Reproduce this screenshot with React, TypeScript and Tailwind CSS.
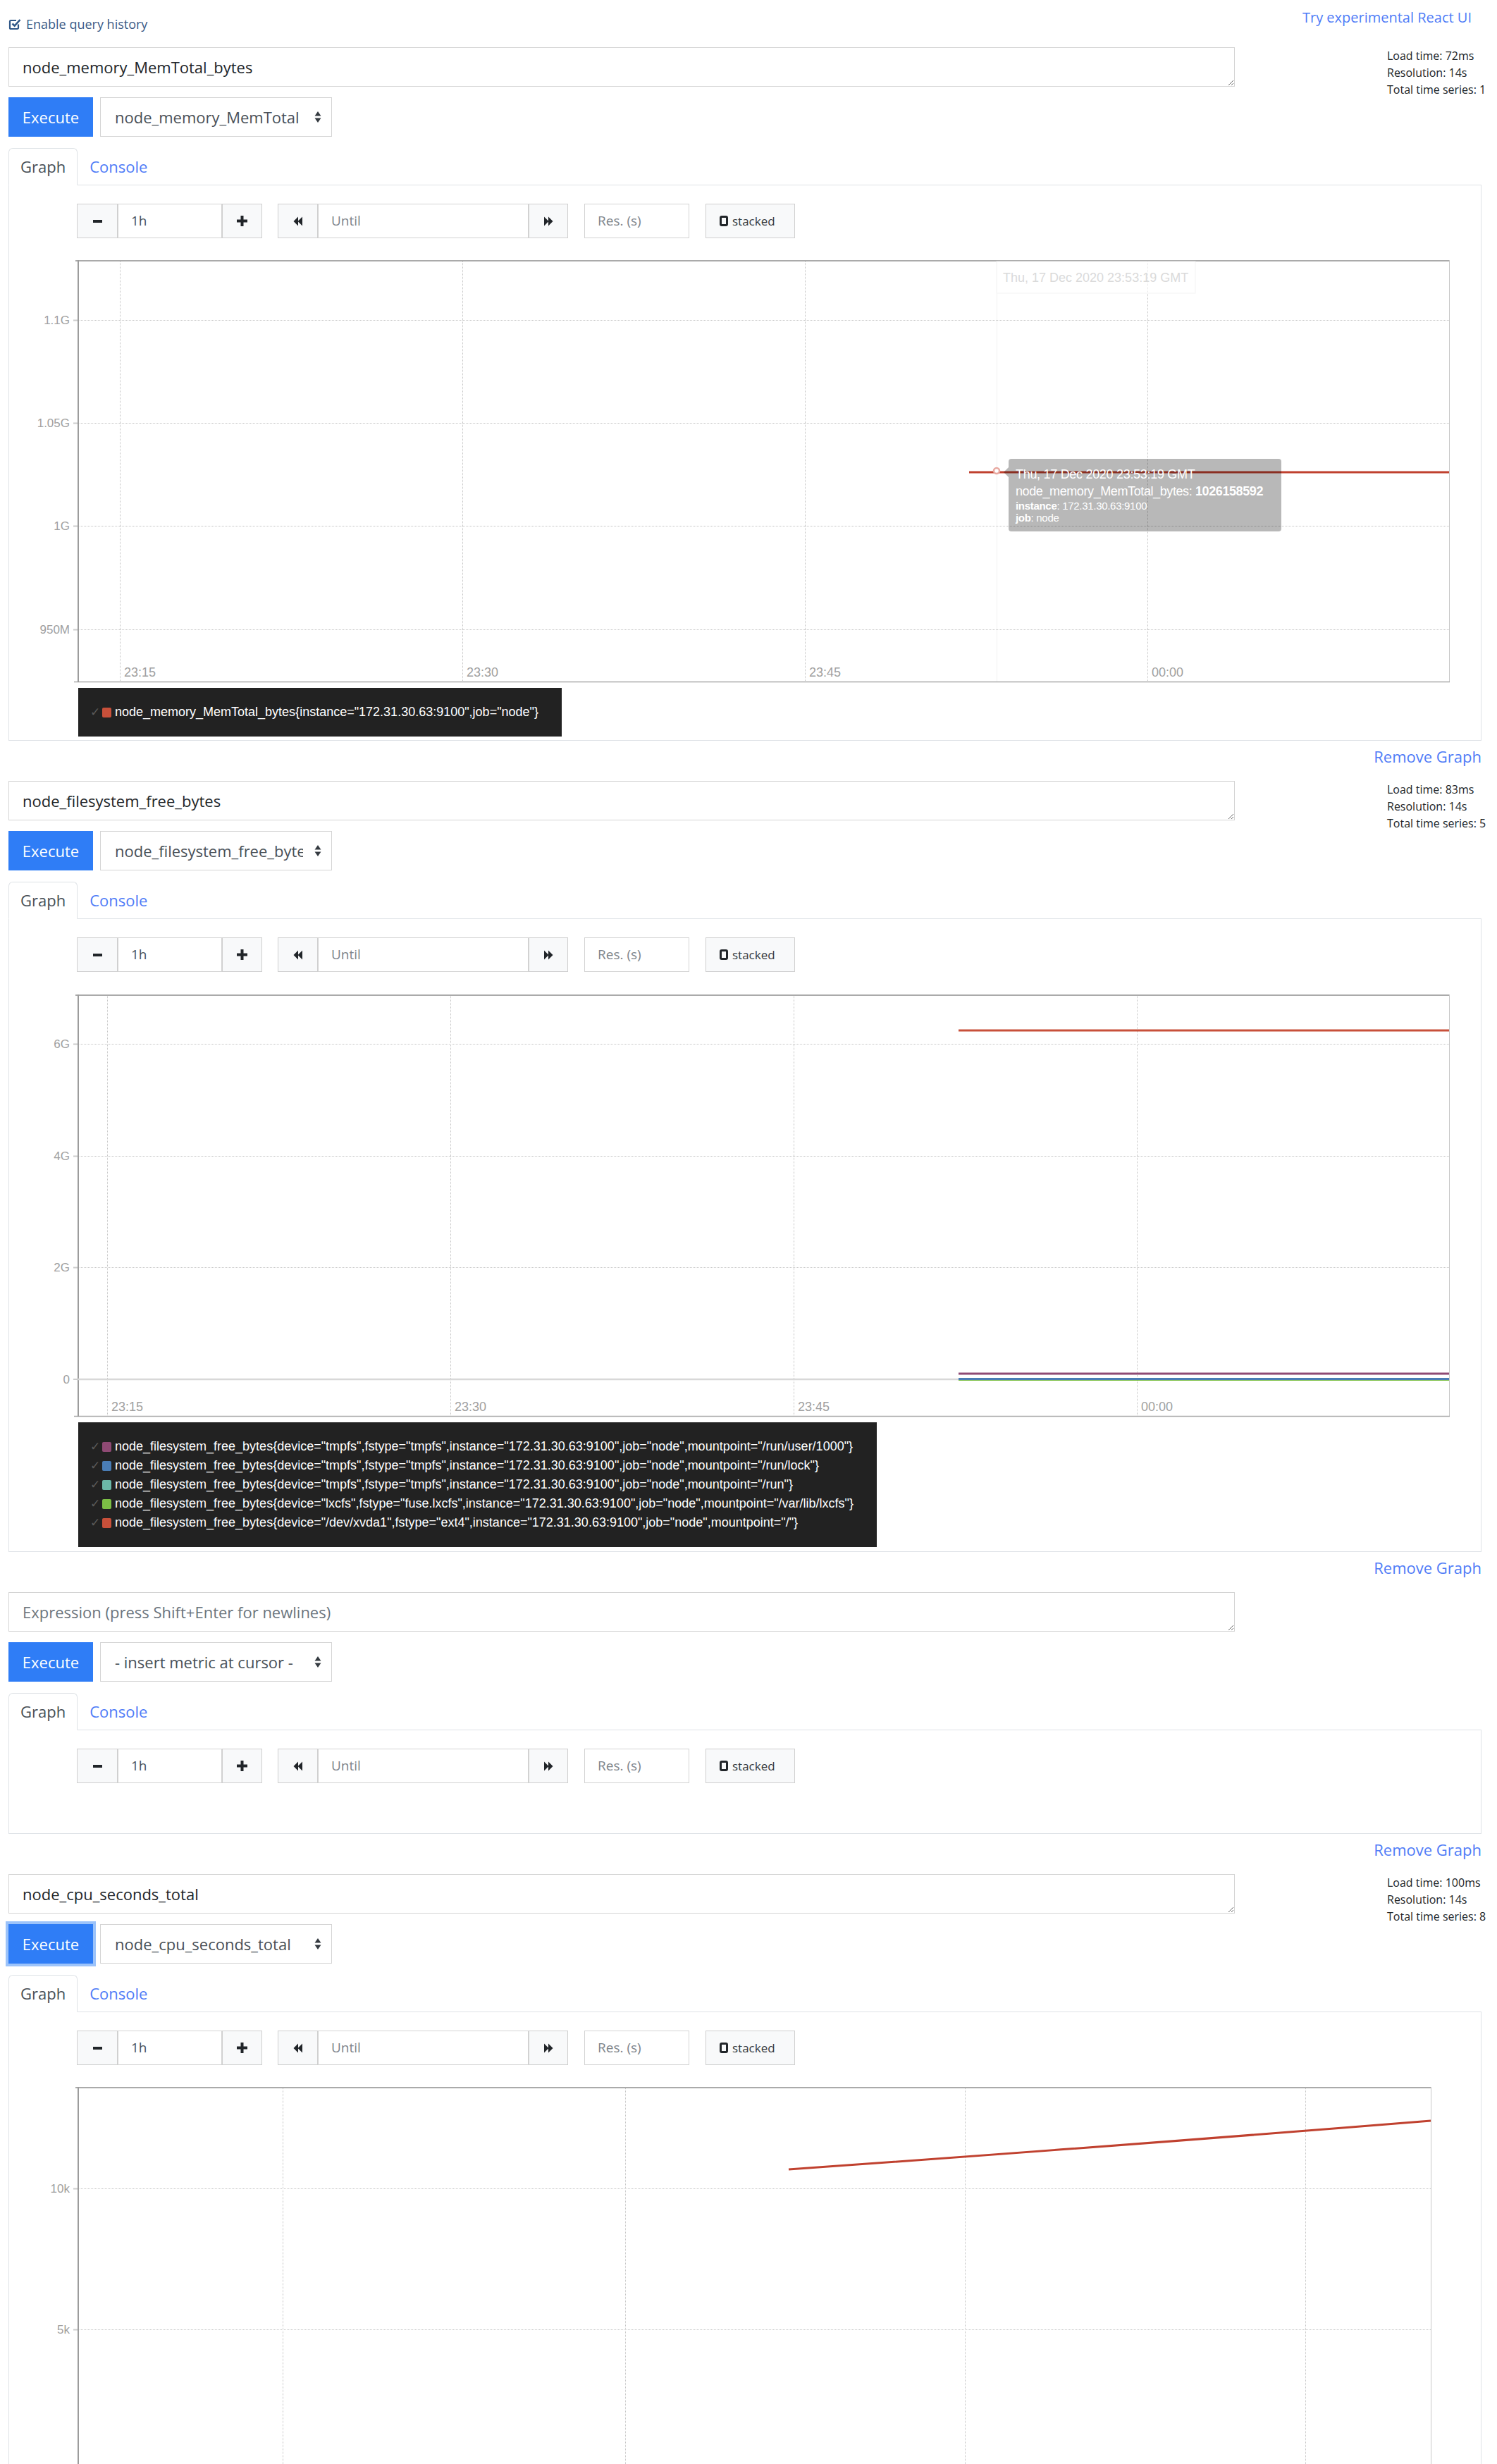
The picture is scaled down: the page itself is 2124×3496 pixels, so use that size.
import React from "react";

const SANS = "font-['Open_Sans','Segoe_UI',sans-serif]";
const ARIAL = "font-['Liberation_Sans',Arial,sans-serif]";
const SVG_FONT = "Liberation Sans, Arial, sans-serif";
const AX = 111;

type YTick = { y: number; label: string };
type XTick = { x: number; label: string };

function CheckSquare() {
  return (
    <svg width="18" height="18" viewBox="0 0 18 18">
      <path d="M14 9.5v5a1.5 1.5 0 0 1-1.5 1.5h-9A1.5 1.5 0 0 1 2 14.5v-9A1.5 1.5 0 0 1 3.5 4h7.5" fill="none" stroke="#2e5687" strokeWidth="2.2" />
      <path d="M5.5 8.5l3.2 3.2L16.5 3" fill="none" stroke="#2e5687" strokeWidth="2.6" />
    </svg>
  );
}

function Arrows() {
  return (
    <svg width="10" height="18" viewBox="0 0 10 18">
      <path d="M5 1L9.5 7.5H0.5Z" fill="#343a40" />
      <path d="M5 17L0.5 10.5H9.5Z" fill="#343a40" />
    </svg>
  );
}

// fa-backward / fa-forward: two solid triangles
function Back({ flip }: { flip?: boolean }) {
  return (
    <svg width="14" height="16" viewBox="0 0 14 16" className={flip ? "rotate-180" : ""}>
      <path d="M0.5 8L7 1.5V14.5Z" fill="#212529" />
      <path d="M6.5 8L13 1.5V14.5Z" fill="#212529" />
    </svg>
  );
}

function Btn({ w, children }: { w: string; children: React.ReactNode }) {
  return (
    <div className={`${w} h-[49px] flex items-center justify-center bg-[#f8f9fa] border border-[#cfcfcf]`}>
      {children}
    </div>
  );
}

function Field({ w, text, dark }: { w: string; text: string; dark?: boolean }) {
  return (
    <div className={`${w} h-[49px] flex items-center pl-[18px] bg-white border border-[#d3d3d3] text-[19px] ${dark ? "text-[#495057]" : "text-[#7d848b]"}`}>
      {text}
    </div>
  );
}

function Controls() {
  return (
    <div className={`flex items-center ml-[96px] h-[49px] ${SANS}`}>
      <div className="flex">
        <Btn w="w-[58px]">
          <div className="w-[13px] h-[4px] bg-[#212529]" />
        </Btn>
        <Field w="w-[148px]" text="1h" dark />
        <Btn w="w-[57px]">
          <svg width="15" height="15" viewBox="0 0 15 15">
            <rect x="5.5" y="0" width="4" height="15" fill="#212529" />
            <rect x="0" y="5.5" width="15" height="4" fill="#212529" />
          </svg>
        </Btn>
      </div>
      <div className="flex ml-[22px]">
        <Btn w="w-[57px]">
          <Back />
        </Btn>
        <Field w="w-[299px]" text="Until" />
        <Btn w="w-[56px]">
          <Back flip />
        </Btn>
      </div>
      <div className="ml-[23px]">
        <Field w="w-[149px]" text="Res. (s)" />
      </div>
      <div className="ml-[23px] w-[127px] h-[49px] flex items-center pl-[19px] gap-[6px] bg-[#f8f9fa] border border-[#cfcfcf] text-[17px] text-[#343a40]">
        <div className="w-[12px] h-[15px] border-[3px] border-[#212529] rounded-[3px]" />
        stacked
      </div>
    </div>
  );
}

function Axes({ h, right, yTicks, xTicks, xLabels = true }: { h: number; right: number; yTicks: YTick[]; xTicks: XTick[]; xLabels?: boolean }) {
  return (
    <g fontFamily={SVG_FONT}>
      {xTicks.map((t) => (
        <g key={t.label}>
          <line x1={t.x + 0.5} y1={0} x2={t.x + 0.5} y2={h} stroke="#c4c4c4" strokeDasharray="1 1" />
          {xLabels && (
            <text x={t.x + 6} y={h - 8} fontSize={18} fill="#a0a0a0">
              {t.label}
            </text>
          )}
        </g>
      ))}
      {yTicks.map((t) => (
        <g key={t.label}>
          <line x1={AX} y1={t.y + 0.5} x2={right} y2={t.y + 0.5} stroke="#c4c4c4" strokeDasharray="1 1" />
          <line x1={AX - 7} y1={t.y + 0.5} x2={AX} y2={t.y + 0.5} stroke="#cccccc" strokeWidth={2} />
          <text x={AX - 12} y={t.y + 6} textAnchor="end" fontSize={17} fill="#a0a0a0">
            {t.label}
          </text>
        </g>
      ))}
      <line x1={AX - 4} y1={1} x2={right} y2={1} stroke="#aaaaaa" strokeWidth={2} />
      <line x1={right - 0.5} y1={0} x2={right - 0.5} y2={h} stroke="#c8c8c8" />
      <line x1={AX - 6} y1={h - 0.5} x2={right} y2={h - 0.5} stroke="#aaaaaa" strokeWidth={1.5} />
      <line x1={AX} y1={0} x2={AX} y2={h} stroke="#9c9c9c" strokeWidth={2} />
    </g>
  );
}

function MemoryGraph() {
  const h = 599;
  return (
    <div className="relative mt-[31px]">
      <svg width={2088} height={h + 1} viewBox={`13 0 2088 ${h + 1}`} className="block">
        <line x1={1414.5} y1={0} x2={1414.5} y2={h} stroke="#f2f2f2" />
        <Axes
          h={h}
          right={2057}
          yTicks={[
            { y: 85, label: "1.1G" },
            { y: 231, label: "1.05G" },
            { y: 377, label: "1G" },
            { y: 524, label: "950M" },
          ]}
          xTicks={[
            { x: 170, label: "23:15" },
            { x: 656, label: "23:30" },
            { x: 1142, label: "23:45" },
            { x: 1628, label: "00:00" },
          ]}
        />
        <rect x={1414} y={2} width={282} height={45} fill="white" fillOpacity={0.6} stroke="#f4f4f4" />
        <text x={1423} y={31} fontSize={18} fill="#dadada" fontFamily={SVG_FONT}>
          Thu, 17 Dec 2020 23:53:19 GMT
        </text>
        <line x1={1375} y1={301} x2={2056} y2={301} stroke="#c0412f" strokeWidth={3} />
        <circle cx={1414} cy={299} r={4} fill="white" stroke="#e8a8a0" strokeWidth={2.5} />
      </svg>
      <div className={`absolute left-[1418px] top-[282px] w-[387px] h-[103px] rounded-[4px] bg-[rgba(0,0,0,0.28)] text-white pl-[10px] pt-[10px] ${ARIAL}`}>
        <div className="absolute -left-[7px] top-[12px] w-0 h-0 border-y-[7px] border-y-transparent border-r-[7px] border-r-[rgba(0,0,0,0.28)]" />
        <div className="text-[18px] leading-[24px] tracking-[-0.3px]">Thu, 17 Dec 2020 23:53:19 GMT</div>
        <div className="text-[18px] leading-[24px] tracking-[-0.4px] whitespace-nowrap">
          node_memory_MemTotal_bytes: <b>1026158592</b>
        </div>
        <div className="text-[15px] leading-[17px] tracking-[-0.3px]">
          <b>instance</b>: 172.31.30.63:9100
        </div>
        <div className="text-[15px] leading-[17px] tracking-[-0.3px]">
          <b>job</b>: node
        </div>
      </div>
    </div>
  );
}

function FilesystemGraph() {
  const h = 599;
  return (
    <div className="mt-[32px]">
      <svg width={2088} height={h + 1} viewBox={`13 0 2088 ${h + 1}`} className="block">
        <Axes
          h={h}
          right={2057}
          yTicks={[
            { y: 70, label: "6G" },
            { y: 229, label: "4G" },
            { y: 387, label: "2G" },
          ]}
          xTicks={[
            { x: 152, label: "23:15" },
            { x: 639, label: "23:30" },
            { x: 1126, label: "23:45" },
            { x: 1613, label: "00:00" },
          ]}
        />
        <line x1={AX} y1={546} x2={2056} y2={546} stroke="#d8d8d8" strokeWidth={2.5} />
        <line x1={AX - 7} y1={546} x2={AX} y2={546} stroke="#cccccc" strokeWidth={2} />
        <text x={AX - 12} y={552} textAnchor="end" fontSize={17} fill="#a0a0a0" fontFamily={SVG_FONT}>
          0
        </text>
        <line x1={1360} y1={51} x2={2056} y2={51} stroke="#c8503a" strokeWidth={3} />
        <line x1={1360} y1={538} x2={2056} y2={538} stroke="#8f4a74" strokeWidth={3} />
        <line x1={1360} y1={547} x2={2056} y2={547} stroke="#7cbf45" strokeWidth={2} />
        <line x1={1360} y1={545.5} x2={2056} y2={545.5} stroke="#4a7db5" strokeWidth={3} />
      </svg>
    </div>
  );
}

function CpuGraph() {
  const h = 599;
  return (
    <div className="mt-[31px]">
      <svg width={2088} height={h + 1} viewBox={`13 0 2088 ${h + 1}`} className="block">
        <Axes
          h={h}
          right={2031}
          xLabels={false}
          yTicks={[
            { y: 144, label: "10k" },
            { y: 344, label: "5k" },
          ]}
          xTicks={[
            { x: 401, label: "23:15" },
            { x: 887, label: "23:30" },
            { x: 1369, label: "23:45" },
            { x: 1852, label: "00:00" },
          ]}
        />
        <path d="M1119 117 Q1560 86 2030 48" fill="none" stroke="#c0412f" strokeWidth={3} />
      </svg>
    </div>
  );
}

function Legend({ rows }: { rows: { color: string; text: string }[] }) {
  return (
    <div className={`ml-[98px] mt-[7px] inline-block bg-[#222222] pl-[17px] pr-[33px] py-[21px] ${ARIAL}`}>
      {rows.map((r) => (
        <div key={r.text} className="flex items-center h-[27px] whitespace-nowrap text-[18px] text-white">
          <span className="text-[#5a5a5a] text-[17px] w-[17px]">✓</span>
          <span className="w-[13px] h-[14px] rounded-[2px] mr-[5px]" style={{ background: r.color }} />
          <span>{r.text}</span>
        </div>
      ))}
    </div>
  );
}

function Block({
  expr,
  select,
  stats,
  focused,
  last,
  children,
}: {
  expr: string;
  select: string;
  stats?: string[];
  focused?: boolean;
  last?: boolean;
  children: React.ReactNode;
}) {
  return (
    <div className={SANS}>
      <div className="flex">
        <div className="w-[1740px]">
          <textarea
            readOnly
            rows={1}
            value={expr}
            placeholder="Expression (press Shift+Enter for newlines)"
            className="block w-full h-[56px] border border-[#d4d4d4] pl-[19px] pt-[12px] text-[22px] leading-[30px] text-[#212529] placeholder:text-[#6c757d] outline-none"
          />
          <div className="flex mt-[15px] gap-[10px]">
            <div
              className={`w-[120px] h-[56px] flex items-center justify-center bg-[#2f7df6] text-white text-[22px] ${
                focused ? "ring-4 ring-[#9cc3fa]" : ""
              }`}
            >
              Execute
            </div>
            <div className="w-[329px] h-[56px] flex items-center pl-[20px] border border-[#d4d4d4] text-[22px] text-[#495057]">
              <span className="w-[267px] overflow-hidden whitespace-nowrap">{select}</span>
              <span className="ml-[16px]">
                <Arrows />
              </span>
            </div>
          </div>
        </div>
        {stats && (
          <div className="ml-auto w-[134px] text-[16px] leading-[24px] text-[#212529] whitespace-nowrap">
            {stats.map((s) => (
              <div key={s}>{s}</div>
            ))}
          </div>
        )}
      </div>
      <div className="mt-[16px] flex h-[53px] border-b border-[#dee2e6]">
        <div className="-mb-px flex items-center px-[16px] border border-[#dee2e6] border-b-white rounded-t-[6px] bg-white text-[22px] text-[#495057]">
          Graph
        </div>
        <div className="flex items-center px-[17px] text-[22px] text-[#4f7cf7]">Console</div>
      </div>
      <div className="border-x border-b border-[#dee2e6] pt-[26px]">{children}</div>
      {!last && (
        <div className="h-[57px] pt-[7px] text-right text-[22px] leading-[30px] text-[#4f7cf7]">Remove Graph</div>
      )}
    </div>
  );
}

const FS_ROWS = [
  { color: "#8f4a74", text: 'node_filesystem_free_bytes{device="tmpfs",fstype="tmpfs",instance="172.31.30.63:9100",job="node",mountpoint="/run/user/1000"}' },
  { color: "#4a7db5", text: 'node_filesystem_free_bytes{device="tmpfs",fstype="tmpfs",instance="172.31.30.63:9100",job="node",mountpoint="/run/lock"}' },
  { color: "#6cb8a8", text: 'node_filesystem_free_bytes{device="tmpfs",fstype="tmpfs",instance="172.31.30.63:9100",job="node",mountpoint="/run"}' },
  { color: "#7cbf45", text: 'node_filesystem_free_bytes{device="lxcfs",fstype="fuse.lxcfs",instance="172.31.30.63:9100",job="node",mountpoint="/var/lib/lxcfs"}' },
  { color: "#c8503a", text: 'node_filesystem_free_bytes{device="/dev/xvda1",fstype="ext4",instance="172.31.30.63:9100",job="node",mountpoint="/"}' },
];

export default function App() {
  return (
    <div className="w-[2124px] h-[3496px] overflow-hidden bg-white">
      <div className={`flex items-start justify-between h-[67px] pl-[12px] pr-[36px] ${SANS}`}>
        <div className="mt-[24px] flex items-center gap-[7px] text-[18px] leading-[20px] text-[#3a5a86]">
          <CheckSquare />
          Enable query history
        </div>
        <div className="mt-[11px] text-[20px] leading-[28px] text-[#4f7cf7]">Try experimental React UI</div>
      </div>
      <div className="pl-[12px] pr-[22px]">
        <Block
          expr="node_memory_MemTotal_bytes"
          select="node_memory_MemTotal"
          stats={["Load time: 72ms", "Resolution: 14s", "Total time series: 1"]}
        >
          <Controls />
          <MemoryGraph />
          <Legend rows={[{ color: "#c8503a", text: 'node_memory_MemTotal_bytes{instance="172.31.30.63:9100",job="node"}' }]} />
          <div className="h-[5px]" />
        </Block>
        <Block
          expr="node_filesystem_free_bytes"
          select="node_filesystem_free_bytes"
          stats={["Load time: 83ms", "Resolution: 14s", "Total time series: 5"]}
        >
          <Controls />
          <FilesystemGraph />
          <Legend rows={FS_ROWS} />
          <div className="h-[6px]" />
        </Block>
        <Block expr="" select="- insert metric at cursor -">
          <Controls />
          <div className="h-[71px]" />
        </Block>
        <Block
          expr="node_cpu_seconds_total"
          select="node_cpu_seconds_total"
          stats={["Load time: 100ms", "Resolution: 14s", "Total time series: 8"]}
          focused
          last
        >
          <Controls />
          <CpuGraph />
        </Block>
      </div>
    </div>
  );
}
